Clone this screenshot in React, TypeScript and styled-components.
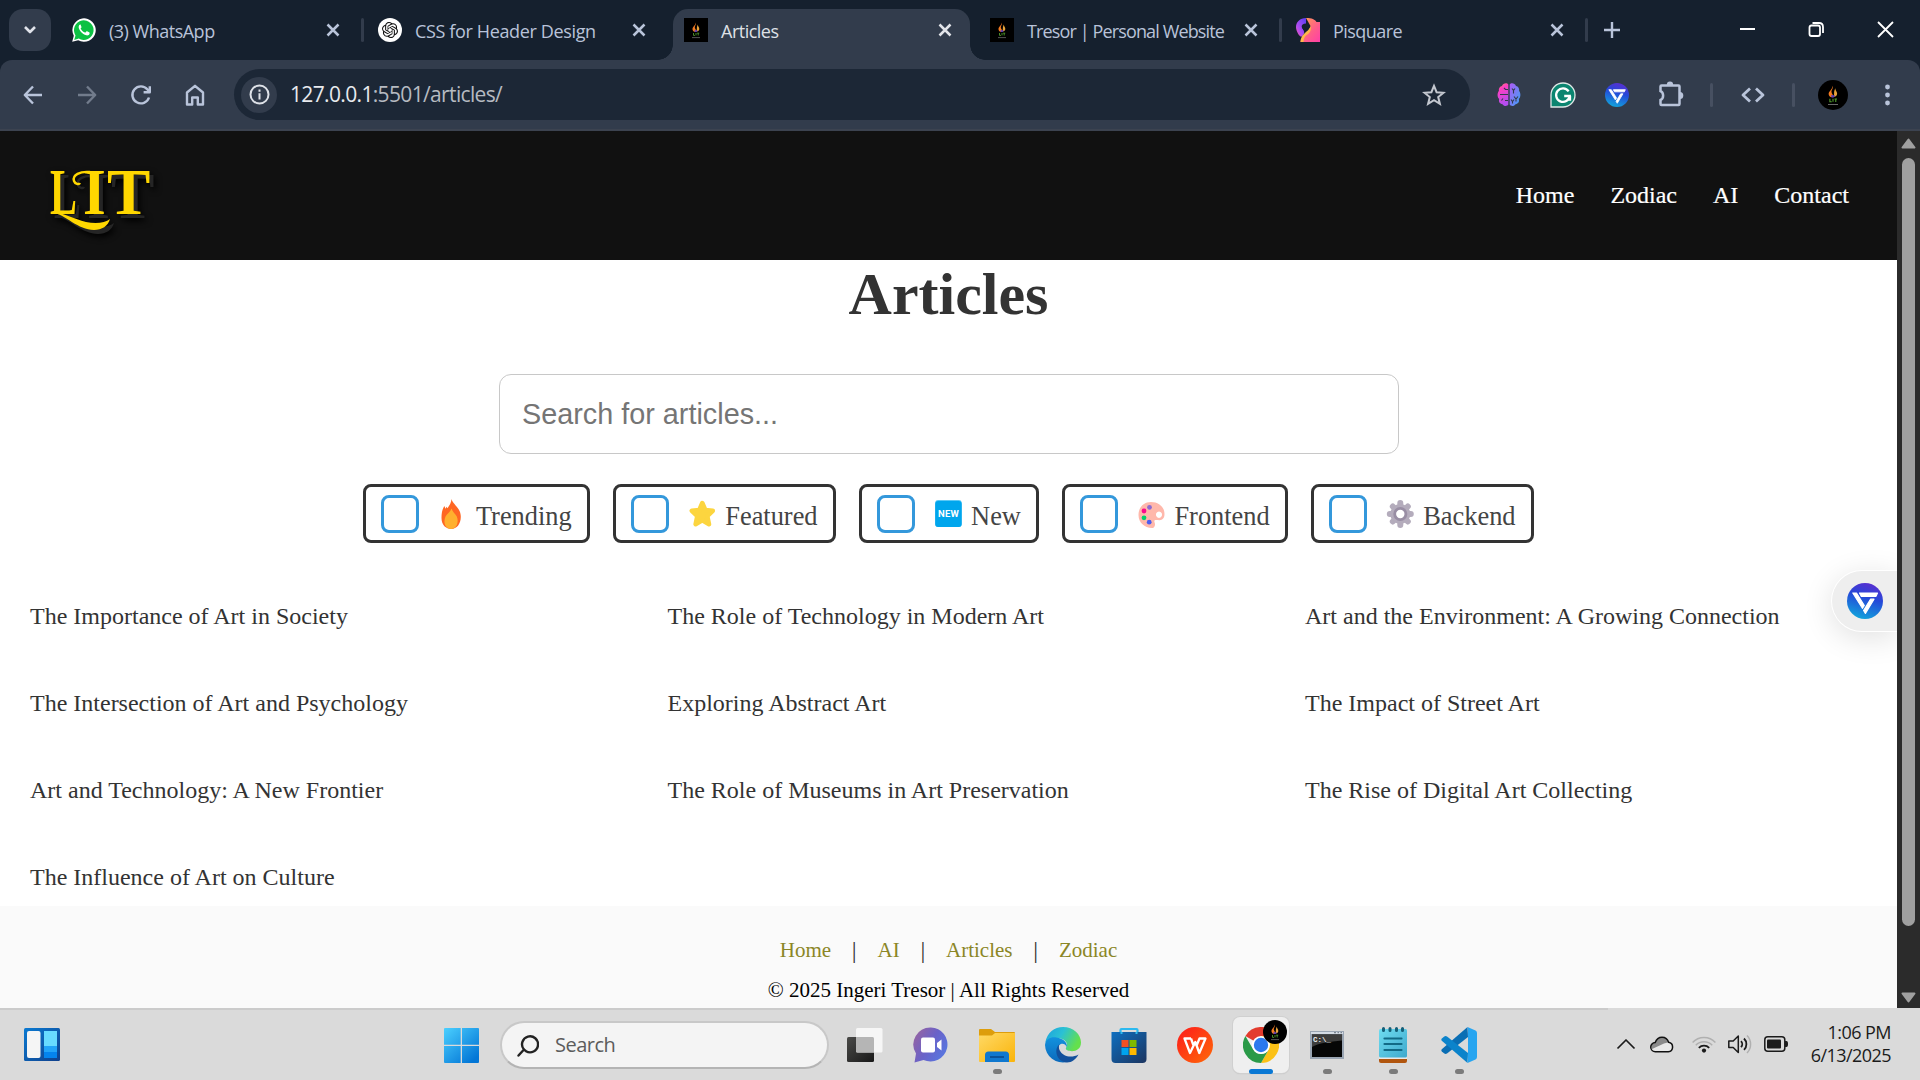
import React from 'react';
import styled, { createGlobalStyle, css } from 'styled-components';
import { SiOpenai } from 'react-icons/si';

const ui = `"Open Sans", "Noto Sans", sans-serif`;
const serif = `"Liberation Serif", "Times New Roman", serif`;

const Global = createGlobalStyle`
  * { box-sizing: border-box; }
  body { margin: 0; overflow: hidden; }
  svg { display: block; flex: none; }
`;

const Screen = styled.div`
  width: 1920px;
  height: 1080px;
  display: flex;
  flex-direction: column;
  overflow: hidden;
  background: #fff;
`;

/* ---------- browser chrome ---------- */

const TabStrip = styled.div`
  height: 60px;
  flex: none;
  display: flex;
  background: #15202e;
`;

const TabSearch = styled.div`
  width: 42px;
  height: 42px;
  margin: 9px 10px 0 9px;
  border-radius: 14px;
  background: #323c4c;
  display: grid;
  place-items: center;
`;

const Tab = styled.div`
  width: 306px;
  height: 60px;
  padding-top: 9px;
  padding-right: 9px;
  display: flex;
`;

const TabBody = styled.div<{ $active?: boolean }>`
  position: relative;
  flex: 1;
  display: flex;
  align-items: center;
  height: 51px;
  padding: 0 18px 9px 11px;
  border-radius: 15px 15px 0 0;
  ${p => p.$active && css`
    background: #323c4c;
    &::before, &::after {
      content: '';
      position: absolute;
      bottom: 0;
      width: 15px;
      height: 15px;
    }
    &::before { left: -15px; background: radial-gradient(circle at 0 0, transparent 14.5px, #323c4c 15px); }
    &::after { right: -15px; background: radial-gradient(circle at 100% 0, transparent 14.5px, #323c4c 15px); }
  `}
`;

const TabLabel = styled.span<{ $active?: boolean; $track: number }>`
  flex: 1;
  margin-left: 13px;
  padding-top: 1px;
  font: 18px/24px ${ui};
  letter-spacing: ${p => p.$track}px;
  white-space: nowrap;
  color: ${p => (p.$active ? '#dfe1e6' : '#b9c3d9')};
`;

const TabDivider = styled.i<{ $hidden?: boolean }>`
  width: 3px;
  height: 24px;
  margin: 9px -6px 0 3px;
  border-radius: 2px;
  background: #323c4c;
  visibility: ${p => (p.$hidden ? 'hidden' : 'visible')};
`;

const NewTab = styled.div`
  margin: 22px 0 0 13px;
`;

const WindowControls = styled.div`
  margin: 21px 26px 0 auto;
  display: flex;
  gap: 52px;
`;

const ToolbarBack = styled.div`
  height: 71px;
  flex: none;
  background: #15202e;
`;

const Toolbar = styled.div`
  height: 71px;
  padding: 9px 0 0 21px;
  border-radius: 12px 12px 0 0;
  background: #323c4c;
  box-shadow: inset 0 -2px #3c4350;
  display: flex;
`;

const NavButtons = styled.div`
  width: 213px;
  height: 51px;
  display: flex;
  align-items: center;
  gap: 30px;
`;

const Omnibox = styled.div`
  width: 1236px;
  height: 51px;
  padding: 0 24px 0 7px;
  border-radius: 26px;
  background: #1c2736;
  display: flex;
  align-items: center;
`;

const SiteInfo = styled.div`
  width: 36px;
  height: 36px;
  border-radius: 50%;
  background: #323c4c;
  display: grid;
  place-items: center;
`;

const Url = styled.div`
  flex: 1;
  margin-left: 13px;
  padding-bottom: 1px;
  font: 21px/30px ${ui};
  letter-spacing: -0.65px;
  color: #b6bac1;
  b { font-weight: 400; color: #e8eaee; }
`;

const Extensions = styled.div`
  height: 51px;
  padding-left: 27px;
  display: flex;
  align-items: center;
  gap: 29px;
`;

const BarDivider = styled.i<{ $before: number; $after: number }>`
  width: 3px;
  height: 24px;
  margin: 0 ${p => p.$after}px 0 ${p => p.$before}px;
  border-radius: 2px;
  background: #475061;
`;

/* ---------- page ---------- */

const Viewport = styled.div`
  height: 877px;
  flex: none;
  display: flex;
  position: relative;
`;

const Page = styled.main`
  width: 1897px;
  display: flex;
  flex-direction: column;
  font-family: ${serif};
`;

const Scrollbar = styled.div`
  width: 23px;
  padding: 7px 0 4px;
  background: #2b2b2b;
  display: flex;
  flex-direction: column;
  align-items: center;
`;

const Thumb = styled.div`
  width: 13px;
  height: 768px;
  margin: 9px 0 auto;
  border-radius: 7px;
  background: #a0a0a0;
`;

const SiteHeader = styled.header`
  height: 129px;
  padding: 0 48px 2px 50px;
  background: #111;
  display: flex;
  justify-content: space-between;
  align-items: center;
`;

const Logo = styled.div`
  position: relative;
  display: flex;
  height: 72px;
  margin-bottom: 5px;
  font: bold 65px/72px ${serif};
  color: #ffd700;
  filter: drop-shadow(4px 4px 0 #252525) drop-shadow(2px 3px 3px #000);
`;

const LogoLetter = styled.span<{ $width: number; $scale: number }>`
  width: ${p => p.$width}px;
  transform: scaleX(${p => p.$scale});
  transform-origin: 0 0;
`;

const Flourish = styled.svg`
  position: absolute;
  left: 0;
  top: 0;
`;

const SiteNav = styled.nav`
  display: flex;
  gap: 36px;
  font-size: 24px;
  line-height: 28px;
  color: #fff;
  -webkit-text-stroke: 0.2px #fff;
`;

const Title = styled.h1`
  margin: -1px 0 0;
  font-size: 60px;
  line-height: 70px;
  text-align: center;
  color: #333;
`;

const SearchInput = styled.input`
  width: 900px;
  height: 80px;
  margin: 45px auto 0;
  padding: 0 22.5px;
  border: 1px solid #c8c8c8;
  border-radius: 12px;
  outline: none;
  background: #fff;
  font: 28.8px "Liberation Sans", Arial, sans-serif;
  &::placeholder { color: #757575; opacity: 1; }
`;

const Filters = styled.div`
  margin-top: 30px;
  display: flex;
  justify-content: center;
  gap: 23px;
`;

const Chip = styled.label`
  height: 59px;
  padding: 0 15px;
  border: 3px solid #333;
  border-radius: 8px;
  display: flex;
  align-items: center;
  font-size: 26.4px;
  line-height: 30px;
  color: #444;
`;

const Box = styled.i`
  width: 38px;
  height: 38px;
  margin-right: 16px;
  border: 3px solid #3498db;
  border-radius: 8px;
`;

const Emoji = styled.span`
  width: 34.5px;
  height: 32px;
  margin: 2px 6px 0 0;
`;

const ChipText = styled.span`
  padding-top: 4px;
`;

const ArticleGrid = styled.section`
  margin: 59px 30px 15px;
  display: grid;
  grid-template-columns: repeat(3, 637.5px);
  row-gap: 59px;
  font-size: 24px;
  line-height: 28px;
  color: #333;
`;

const SiteFooter = styled.footer`
  flex: 1;
  padding-top: 30px;
  background: #fafafa;
  text-align: center;
`;

const FooterLinks = styled.div`
  display: flex;
  justify-content: center;
  gap: 20.8px;
  margin-bottom: 14px;
  font-size: 21px;
  line-height: 28px;
  color: #8b8626;
`;

const Pipe = styled.span`
  font-size: 24px;
  color: #333;
`;

const Copyright = styled.div`
  font-size: 21px;
  line-height: 24px;
  color: #000;
`;

const SideHandle = styled.div`
  position: absolute;
  right: 23px;
  top: 439px;
  width: 66px;
  height: 62px;
  padding: 12px 0 0 15px;
  border: 1.5px solid #fff;
  border-right: 0;
  border-radius: 31px 0 0 31px;
  background: #eee;
  box-shadow: 0 6px 30px rgba(0, 0, 0, 0.12);
  clip-path: inset(-40px 0 -50px -50px);
`;

/* ---------- taskbar ---------- */

const Taskbar = styled.div`
  height: 72px;
  flex: none;
  background: linear-gradient(#cbcbcb, #cbcbcb) 0 0 / 1608px 2px no-repeat #dadada;
  display: flex;
  align-items: center;
`;

const Start = styled.div`
  width: 479px;
  padding-left: 24px;
  margin-top: 2px;
  display: flex;
  justify-content: space-between;
`;

const SearchPill = styled.div`
  width: 329px;
  height: 48px;
  margin: 2px 0 0 21px;
  padding-left: 15px;
  border: 2px solid #c8c8c8;
  border-bottom-color: #b4b4b4;
  border-radius: 24px;
  background: #f4f4f4;
  display: flex;
  align-items: center;
  gap: 16px;
  font: 20px/28px ${ui};
  letter-spacing: -0.5px;
  color: #5c5c5c;
`;

const Apps = styled.div`
  display: flex;
  margin: 2px 0 0 3px;
`;

const AppTile = styled.div<{ $current?: boolean }>`
  position: relative;
  width: 56px;
  height: 56px;
  margin: 0 5px;
  border-radius: 7px;
  display: grid;
  place-items: center;
  ${p => p.$current && css`
    background: #efefef;
    box-shadow: 0 0 0 1px #d0d0d0, 0 1px 1px #bbb;
  `}
`;

const Indicator = styled.i<{ $current?: boolean }>`
  position: absolute;
  bottom: -1px;
  left: ${p => (p.$current ? 16 : 23.5)}px;
  width: ${p => (p.$current ? 24 : 9)}px;
  height: 5px;
  border-radius: 3px;
  background: ${p => (p.$current ? '#0a78d4' : '#7b7b7b')};
`;

const Badge = styled.span`
  position: absolute;
  left: 30px;
  top: 3px;
`;

const Tray = styled.div`
  margin-left: auto;
  margin-right: 29px;
  display: flex;
  align-items: center;
`;

const TrayIcon = styled.span<{ $gap: number }>`
  margin-right: ${p => p.$gap}px;
`;

const Clock = styled.div`
  width: 82px;
  text-align: right;
  white-space: nowrap;
  font: 18px/23px ${ui};
  letter-spacing: -0.55px;
  color: #1b1b1b;
`;

/* ---------- icons ---------- */

type StrokeProps = { w: number; h: number; d: string; color?: string; sw?: number; cap?: 'round' | 'butt' };
const Stroke = ({ w, h, d, color = '#b9c4da', sw = 2.4, cap = 'butt' }: StrokeProps) => (
  <svg width={w} height={h} viewBox={`0 0 ${w} ${h}`} fill="none" stroke={color} strokeWidth={sw} strokeLinecap={cap} strokeLinejoin="round">
    <path d={d} />
  </svg>
);

const Close = ({ color }: { color: string }) => <Stroke w={14} h={14} d="M1.5 1.5 12.5 12.5M12.5 1.5 1.5 12.5" color={color} sw={2.5} />;

const WhatsApp = () => (
  <svg width="24" height="24" viewBox="0 0 24 24">
    <path d="M.2 23.8 1.8 17.7A11.7 11.7 0 1 1 6.2 22.2z" fill="#fff" />
    <path d="M2.2 21.9 3.5 17.4A9.8 9.8 0 1 1 6.8 20.6z" fill="#0cc143" />
    <path d="M8.4 6.6c-.9 0-1.9 1.1-1.7 2.8.3 2.3 3.4 6.8 7.6 7.9 1.7.4 3.2-.7 3.3-1.9.1-.8 0-.9-.5-1.2l-2-.9c-.5-.2-.7 0-1.7 1.3-.4.2-3-.7-4.8-4 0-.5 1-1 .9-1.7l-.8-1.9c-.1-.4-.1-.4-.3-.4z" fill="#fff" />
  </svg>
);

const ChatIcon = () => (
  <svg width="24" height="24" viewBox="0 0 24 24">
    <circle cx="12" cy="12" r="12" fill="#fff" />
    <g transform="translate(4 4)"><SiOpenai size={16} color="#111" /></g>
  </svg>
);

const Flame = ({ size, round }: { size: number; round?: boolean }) => (
  <svg width={size} height={size} viewBox="0 0 24 24">
    {round ? <circle cx="12" cy="12" r="12" fill="#000" /> : <path d="M0 0h24v24H0z" fill="#000" />}
    <path d="M11.6 4.5c1 2-1 3.3-.8 5 .1 1.5 1.6 2 1.2 4-1.600.8-3.400-.3-3.500-2.300C8.400 8.800 11.700 7.500 11.600 4.500z" fill="#f47a20" />
    <path d="M14 6.500c-.4 1.900 1.400 2.600 1.300 4.500-.1 1.600-1.600 2.700-2.900 2.300 1.100-2.600-.3-3.700 1.600-6.800z" fill="#e8a33a" />
    <path d="M10.300 12.200h3.300l-1 1.800h-1.500z" fill="#5a3fc0" />
    <path d="M9.500 15v2.400h1.500M12 15v2.400M13.200 15.200h2M14.200 15.200v2.300" stroke="#4f9a2c" strokeWidth=".9" fill="none" />
    <path d="M8 19.600h8" stroke="#777" strokeWidth=".7" />
  </svg>
);

const Pisquare = () => (
  <svg width="24" height="24" viewBox="0 0 24 24">
    <defs>
      <linearGradient id="piA" x1="0" y1="0" x2="1" y2="1"><stop offset="0" stopColor="#ffa64d" /><stop offset=".6" stopColor="#ff5c8a" /><stop offset="1" stopColor="#ff3fa8" /></linearGradient>
      <linearGradient id="piB" x1="0" y1="1" x2="1" y2="0"><stop offset="0" stopColor="#ff55a8" /><stop offset=".35" stopColor="#b04df0" /><stop offset="1" stopColor="#5a3df5" /></linearGradient>
    </defs>
    <path d="M10 0C16 0 19 1.500 20.500 4H24V24H4.500C5 18 14 14 14.500 8z" fill="url(#piA)" />
    <path d="M10 0V5.500C7 5.500 5.500 7 5.700 9c.3 2 2.500 3 2.500 5.500-.3 2-1.500 4-3.200 4.300C2 17 0 12 0 9 0 4 4 0 10 0z" fill="url(#piB)" />
    <path d="M9.500 6C12 6 13 7.500 12.600 9.500c-.5 2-2.600 2.800-3.800 4.500C8.500 12 6.500 11.500 6.300 9.300 6.200 7.300 7.500 6 9.500 6z" fill="#15202e" />
    <path d="M14.500 8c1 3 0 7-4 9-2 1.500-3 4-3 7H4.500c0-3 1-5.500 3-7.500 2.500-3 6-4.500 7-8.500z" fill="#ffb84a" />
  </svg>
);

const Brain = () => (
  <svg width="24" height="28" viewBox="0 0 24 28">
    <defs>
      <linearGradient id="brL" x1="0" y1="0" x2=".3" y2="1"><stop offset="0" stopColor="#ff9a5a" /><stop offset=".3" stopColor="#ff3fc0" /><stop offset="1" stopColor="#b44df0" /></linearGradient>
      <linearGradient id="brR" x1="0" y1="0" x2="1" y2="1"><stop offset="0" stopColor="#b05af5" /><stop offset="1" stopColor="#3aa4f5" /></linearGradient>
    </defs>
    <path d="M11.300 3.500v20c-1 2-4.600 2-5.800-.3C2.600 23.100 1.400 20.500 2.200 18.100.2 16.500 0 12 1.900 10 1.400 7.500 2.800 5.500 5 5.100 6 2.100 10 1.500 11.300 3.500z" fill="url(#brL)" />
    <path d="M12.700 3.500v20c1 2 4.600 2 5.800-.3 2.900-.1 4.100-2.700 3.300-5.100 2-1.600 2.200-6.100.3-8.100.5-2.500-.9-4.500-3.100-4.900C18 2.100 14 1.500 12.700 3.500z" fill="url(#brR)" />
    <path d="M11 8.500H8.500L7 7M3 13.500h8M6 17.500l-1.500 2M11 19.500H8M15 7.500l1.500 2M18 7.500l-1.500 2v3M17 15.500l2 2.500 2-2.500M19 18v2.500M14 18.500l1.500 2 1.500-2M15.500 20.500v2" stroke="#323c4c" strokeWidth="1.100" fill="none" />
  </svg>
);

const Grammarly = () => (
  <svg width="26" height="26" viewBox="0 0 26 26">
    <path d="M1 25V13A12 12 0 1 1 13 25z" fill="#0b8570" stroke="#dfe7e6" strokeWidth="1.300" />
    <path d="M18.600 9.300A6.800 6.800 0 1 0 19.700 14H14.200M20 14v4.800" fill="none" stroke="#fff" strokeWidth="2.300" />
  </svg>
);

const VMark = ({ size }: { size: number }) => (
  <svg width={size} height={size} viewBox="0 0 36 36">
    <defs>
      <linearGradient id="vm" x1=".65" y1="0" x2=".35" y2="1"><stop offset="0" stopColor="#5a2fd0" /><stop offset=".4" stopColor="#2448d8" /><stop offset="1" stopColor="#12a5dc" /></linearGradient>
    </defs>
    <circle cx="18" cy="18" r="18" fill="url(#vm)" />
    <g fill="#fff" stroke="#fff" strokeWidth="1.200" strokeLinejoin="round">
      <path d="M12.500 10H30.500L29 13.300H14.200z" />
      <path d="M5.800 10H9.500L17.300 22.500 15.400 25.300z" />
      <path d="M23.500 16.200H27L18.400 30.400 16.600 27.500z" />
    </g>
  </svg>
);

const Puzzle = () => (
  <svg width="26" height="27" viewBox="0 0 26 27">
    <path d="M2.500 5.500Q2.500 4.500 3.500 4.500H20.500Q21.500 4.500 21.500 5.500V23Q21.500 24 20.500 24H3.500Q2.500 24 2.500 23V19C6 17.600 6 11.600 2.500 10.200z" fill="none" stroke="#b9c4da" strokeWidth="2.500" />
    <path d="M8.800 4a3.200 3.400 0 0 1 6.400 0zM22 11a3.300 3.500 0 0 1 0 7z" fill="#b9c4da" />
  </svg>
);

const FireEmoji = () => (
  <svg width="34" height="32" viewBox="0 0 34 32">
    <path d="M16.500 0c1 4.500 6.500 7.500 8.500 13 .6 2 .8 3.500.8 5 0 7-4.200 12-9.500 12S6.500 26 6.500 19C6.500 13.500 7.500 10 9.300 7l1.300 2.700 1-2 .9 1.500C14.500 6.500 16.300 3.500 16.500 0z" fill="#ff6723" />
    <path d="M16.500 9.500c1 3.500 3.700 5 5.300 8C24 22.500 22 29.500 16.400 30 10 29.800 8 23.500 10.500 17.500c1.600-3 5-4.500 6-8z" fill="#ffb02e" />
  </svg>
);
const StarEmoji = () => (
  <svg width="34" height="32" viewBox="0 0 34 32">
    <path d="M17.300 4l3 7 7.500.8-5.500 5.200 1.700 8.200-6.700-3.800-6.700 3.800 1.700-8.200-5.500-5.200 7.500-.8z" fill="#fcd53f" stroke="#fcd53f" strokeWidth="4.500" strokeLinejoin="round" />
  </svg>
);
const NewEmoji = () => (
  <svg width="34" height="32" viewBox="0 0 34 32">
    <rect x="4.200" y="1" width="26.500" height="27" rx="3" fill="#5cc8f5" />
    <rect x="4.200" y="2" width="26.500" height="26" rx="3" fill="#00a6ed" />
    <text x="17.400" y="18" textAnchor="middle" fontFamily="Roboto, sans-serif" fontWeight="700" fontSize="9.500" textLength="21" fill="#fff">NEW</text>
  </svg>
);
const PaletteEmoji = () => (
  <svg width="34" height="32" viewBox="0 0 34 32">
    <path fillRule="evenodd" d="M17 3c8 0 13.500 5.300 13.500 12 0 4-2 6.200-5 6.200-2.600 0-4.300-.6-5 .4-.6 1 .8 2.300.5 4.300C20.700 28 19.500 29 18 29 10.500 29 4.500 23.500 4.500 16S9.500 3 17 3zm8 9.500a3 3.200 0 1 0 .01 0z" fill="#ffb8ab" />
    <circle cx="15.500" cy="8.300" r="2.400" fill="#8c6bd0" /><circle cx="10" cy="12" r="2.400" fill="#fc0a8c" /><circle cx="10" cy="18.800" r="2.400" fill="#00d26a" /><circle cx="15.200" cy="23.200" r="2.400" fill="#4b5cf0" />
  </svg>
);
const GearEmoji = () => (
  <svg width="34" height="32" viewBox="0 0 34 32">
    <g stroke="#b4acbc" strokeWidth="6" strokeLinecap="round">
      <path d="M17.300 4v22M6.800 15h21M9.800 7.500l15 15M24.800 7.500l-15 15" />
    </g>
    <circle cx="17.300" cy="15" r="8.500" fill="none" stroke="#b4acbc" strokeWidth="3" />
    <circle cx="17.300" cy="15" r="5.600" fill="#fff" stroke="#998ea4" strokeWidth="2.800" />
  </svg>
);

const Widgets = () => (
  <svg width="36" height="33" viewBox="0 0 36 33">
    <defs><linearGradient id="wg" x1="0" y1="0" x2="1" y2="1"><stop offset="0" stopColor="#0a7ad2" /><stop offset="1" stopColor="#10408c" /></linearGradient></defs>
    <rect width="36" height="33" rx="1.500" fill="url(#wg)" />
    <rect x="3" y="3" width="13.500" height="27" rx="2" fill="#f5f5f5" />
    <path d="M20 3h13v15H20z" fill="#68dbff" /><path d="M20 18h13v6H20z" fill="#22a4f8" /><path d="M20 24h13v6H20z" fill="#0484ee" />
  </svg>
);
const Windows = () => (
  <svg width="35" height="35" viewBox="0 0 35 35">
    <defs><linearGradient id="wn" gradientUnits="userSpaceOnUse" x1="0" y1="0" x2="30" y2="32"><stop offset="0" stopColor="#4bd0ff" /><stop offset="1" stopColor="#0376d6" /></linearGradient></defs>
    <path d="M0 1q0-1 1-1h15.700v16.800H0zM18 0h16q1 0 1 1v15.800H18zM0 18.100h16.700V35H1q-1 0-1-1zM18 18.100h17V34q0 1-1 1H18z" fill="url(#wn)" />
  </svg>
);
const TaskView = () => (
  <svg width="36" height="36" viewBox="0 0 36 36">
    <defs><linearGradient id="tv" x1="0" y1="0" x2="1" y2="1"><stop offset="0" stopColor="#4a4a48" /><stop offset="1" stopColor="#181818" /></linearGradient></defs>
    <rect x="0" y="10" width="27" height="25" rx="1.500" fill="url(#tv)" />
    <rect x="9" y="1" width="26.500" height="24.500" rx="1.500" fill="#f8f8f8" opacity=".92" />
    <path d="M9 10h16.500q1.500 0 1.500 1.500V25.500H10.500Q9 25.500 9 24z" fill="#b5b5b5" />
  </svg>
);
const Chat = () => (
  <svg width="36" height="36" viewBox="0 0 36 36">
    <defs><linearGradient id="ch" x1=".1" y1=".2" x2=".9" y2=".7"><stop offset="0" stopColor="#8f63a8" /><stop offset=".5" stopColor="#6a62c8" /><stop offset="1" stopColor="#5a74dd" /></linearGradient></defs>
    <path d="M18 .5a17 17 0 1 1-7.500 32.500L1.500 35.500 3 26.500A17 17 0 0 1 18 .5z" fill="url(#ch)" />
    <rect x="8" y="10.500" width="14" height="15" rx="2" fill="#fff" /><path d="M24 16 28.500 12.500v11L24 20z" fill="#fff" />
  </svg>
);
const Folder = () => (
  <svg width="36" height="33" viewBox="0 0 36 33">
    <defs><linearGradient id="fo" x1="0" y1="0" x2="1" y2="1"><stop offset="0" stopColor="#ffd966" /><stop offset="1" stopColor="#fab40a" /></linearGradient></defs>
    <path d="M0 1q0-1 1-1h11l4 3h19q1 0 1 1v8H0z" fill="#dd9d0c" />
    <path d="M0 6.500h13l3-2.500h20v28q0 1-1 1H1q-1 0-1-1z" fill="url(#fo)" />
    <path d="M6 33v-7q0-3.500 3.500-3.500h17q3.500 0 3.500 3.500v7z" fill="#0f78cf" /><path d="M11 28h14" stroke="#0a4f94" strokeWidth="1.800" />
  </svg>
);
const Edge = () => (
  <svg width="36" height="36" viewBox="0 0 36 36">
    <defs>
      <linearGradient id="e1" x1="0" y1="0" x2="1" y2=".4"><stop offset="0" stopColor="#1ba0df" /><stop offset=".5" stopColor="#2bc1d4" /><stop offset="1" stopColor="#64e04c" /></linearGradient>
      <linearGradient id="e2" x1="0" y1="0" x2="0" y2="1"><stop offset="0" stopColor="#1392de" /><stop offset="1" stopColor="#0b69bb" /></linearGradient>
    </defs>
    <path d="M.2 16C2 5.500 9.500 0 18 0c10.500 0 18 7.500 18 15.500 0 6-4.500 8.700-9 8.700-4 0-7-1.500-6-3.400 3-3.500-.5-9-7-9.500C7 10.800 2 12.500.2 16z" fill="url(#e1)" />
    <path d="M0 18C.5 12 6 9.500 11.500 10.500 19 11.500 23 16.500 21.500 20 20 15 13 16 13 22c0 5.500 5 10 9 13A18 18 0 0 1 0 18z" fill="url(#e2)" />
    <path d="M14.500 17C8 23 12 35 22 35.500c5 0 9-3.500 11.500-8-6 3.500-15.500 3-19-4.500-.8-2-.8-4 0-6z" fill="#12509c" />
  </svg>
);
const Store = () => (
  <svg width="36" height="36" viewBox="0 0 36 36">
    <defs><linearGradient id="st" x1="0" y1="0" x2="1" y2="1"><stop offset="0" stopColor="#0d6fc0" /><stop offset="1" stopColor="#1d3560" /></linearGradient></defs>
    <path d="M9.500 8V3q0-1 1-1h15q1 0 1 1v5" fill="none" stroke="#2cb9ef" strokeWidth="2.200" />
    <path d="M.5 5h35v27q0 4-4 4h-27q-4 0-4-4z" fill="url(#st)" />
    <path d="M9.500 7V5h2v2M24.500 7V5h2v2" fill="#2cb9ef" />
    <path d="M10.500 13h7v7h-7z" fill="#f25022" /><path d="M18.500 13h7v7h-7z" fill="#7fba00" /><path d="M10.500 21h7v7h-7z" fill="#00a4ef" /><path d="M18.500 21h7v7h-7z" fill="#ffb900" />
  </svg>
);
const Wps = () => (
  <svg width="36" height="36" viewBox="0 0 36 36">
    <defs><linearGradient id="wp" x1="0" y1="0" x2="1" y2="1"><stop offset="0" stopColor="#fd1a1c" /><stop offset="1" stopColor="#ff6a08" /></linearGradient></defs>
    <circle cx="18" cy="18" r="18" fill="url(#wp)" />
    <path d="M14 11.500H7.500L13 26 18.300 15 22.300 26 28.500 11.500H22.500L19.800 18M14 11.500 16.500 18.500" fill="none" stroke="#fff" strokeWidth="2.300" strokeLinejoin="round" />
  </svg>
);
const Chrome = () => (
  <svg width="36" height="36" viewBox="0 0 36 36">
    <path d="M18 18 2.400 9A18 18 0 0 1 33.600 9z" fill="#e33b2e" />
    <path d="M18 9H33.600A18 18 0 0 1 18 36L25.800 22.500z" fill="#fbc116" />
    <path d="M2.400 9 10.200 22.500A9 9 0 0 0 25.800 22.500L18 36A18 18 0 0 1 2.400 9z" fill="#2a9a48" />
    <circle cx="18" cy="18" r="9" fill="#fff" /><circle cx="18" cy="18" r="7.200" fill="#2b78ee" />
  </svg>
);
const Cmd = () => (
  <svg width="34" height="28" viewBox="0 0 34 28">
    <path d="M0 0h34v28H0z" fill="#9aa5b3" /><path d="M1 1h32v2H1z" fill="#d5dce5" /><path d="M2 3.500h30V26H2z" fill="#060606" />
    <path d="M2 3.500h30v6C20 11 8 12 2 16z" fill="#3d3d3d" />
    <text x="3" y="11" fontFamily="Liberation Mono, monospace" fontWeight="700" fontSize="7.500" textLength="18" fill="#f0f0f0">C:\_</text>
    <path d="M24 1.700h2M27.500 1.700h1.500M30.500 1.700h1.500" stroke="#66707c" />
  </svg>
);
const Notepad = () => (
  <svg width="28" height="36" viewBox="0 0 28 36">
    <defs><linearGradient id="np" x1="0" y1="0" x2="1" y2="1"><stop offset="0" stopColor="#6edcf0" /><stop offset="1" stopColor="#3fa9cd" /></linearGradient></defs>
    <path d="M0 31.500h28V34q0 2-2 2H2q-2 0-2-2z" fill="#b1560f" /><path d="M0 29h28v3H0z" fill="#e9e9e9" />
    <rect y="2" width="28" height="28.500" rx="1.500" fill="url(#np)" />
    <path d="M5.500 11.500h17M5.500 17h17M5.500 23h17" stroke="#126a86" strokeWidth="2.200" strokeLinecap="round" />
    <path d="M4.500 1.500v2M11 1.500v2M17.500 1.500v2M23.500 1.500v2" stroke="#155f78" strokeWidth="3" strokeLinecap="round" />
  </svg>
);
const Code = () => (
  <svg width="36" height="36" viewBox="0 0 36 36">
    <path d="M26.500 0 27 10 6 26.500Q4.500 27.500 3 26.300L.8 24.400Q-.2 23.300.8 22.200z" fill="#0a6eb4" />
    <path d="M.8 13.800Q-.2 12.700.8 11.600L3 9.700Q4.500 8.500 6 9.500L27 26 26.500 36z" fill="#0b83cb" />
    <path d="M26.500 0 34.500 3.500Q36 4.300 36 6V30Q36 31.700 34.500 32.500L26.500 36Q27 35 27 33V3Q27 1 26.500 0z" fill="#27a5f0" />
  </svg>
);

const Cloud = () => (
  <svg width="24" height="17" viewBox="0 0 24 17">
    <path d="M5.500 15.800a4.600 4.600 0 0 1-.3-9.200C6.500 3 9 1.200 12 1.200c3.200 0 5.700 2 6.600 5.100a4.800 4.800 0 0 1-.3 9.500z" fill="#e9e9e9" />
    <path d="M2 13 14 7.500 18.600 6.300C17.700 3.200 15.200 1.200 12 1.200 9 1.200 6.500 3 5.200 6.600 2 7 .5 10 2 13z" fill="#8b8b8b" />
    <path d="M5.500 15.800a4.600 4.600 0 0 1-.3-9.200C6.500 3 9 1.200 12 1.200c3.200 0 5.700 2 6.600 5.100a4.800 4.800 0 0 1-.3 9.500z" fill="none" stroke="#111" strokeWidth="1.500" />
  </svg>
);
const Wifi = () => (
  <svg width="24" height="18" viewBox="0 0 24 18" fill="none" strokeWidth="1.500">
    <path d="M.6 7.500a15.500 15.500 0 0 1 22.800 0M3.800 10.200a11.500 11.500 0 0 1 16.400 0" stroke="#b0b0b0" />
    <path d="M6.800 12.800a7.500 7.500 0 0 1 10.400 0" stroke="#1b1b1b" strokeWidth="1.800" />
    <circle cx="12" cy="15.600" r="2.100" fill="#1b1b1b" />
  </svg>
);
const Volume = () => (
  <svg width="24" height="20" viewBox="0 0 24 20" fill="none" stroke="#1b1b1b" strokeWidth="1.500" strokeLinejoin="round">
    <path d="M.8 7h4.400L10.300 2v16.500L5.200 13.500H.8z" />
    <path d="M13 7.200a4.300 4.300 0 0 1 0 6M16 4.500a8 8 0 0 1 0 11.400" strokeWidth="1.800" />
    <path d="M19 1.500a12.500 12.500 0 0 1 0 17.500" stroke="#b0b0b0" />
  </svg>
);
const Battery = () => (
  <svg width="24" height="16" viewBox="0 0 24 16">
    <rect x=".8" y=".8" width="20" height="14.400" rx="3" fill="none" stroke="#1b1b1b" strokeWidth="1.500" />
    <rect x="3" y="3.500" width="14" height="9" rx="1" fill="#1b1b1b" /><path d="M21 5h1.500q1.500 0 1.500 3t-1.500 3H21z" fill="#1b1b1b" />
  </svg>
);

/* ---------- data ---------- */

const tabs = [
  { label: '(3) WhatsApp', icon: <WhatsApp />, track: -0.5 },
  { label: 'CSS for Header Design', icon: <ChatIcon />, track: -0.36, noDivider: true },
  { label: 'Articles', icon: <Flame size={24} />, active: true, track: -0.5, noDivider: true },
  { label: 'Tresor | Personal Website', icon: <Flame size={24} />, track: -0.87 },
  { label: 'Pisquare', icon: <Pisquare />, track: -0.55 },
];

const filters = [
  { label: 'Trending', icon: <FireEmoji /> },
  { label: 'Featured', icon: <StarEmoji /> },
  { label: 'New', icon: <NewEmoji /> },
  { label: 'Frontend', icon: <PaletteEmoji /> },
  { label: 'Backend', icon: <GearEmoji /> },
];

const articles = [
  'The Importance of Art in Society', 'The Role of Technology in Modern Art', 'Art and the Environment: A Growing Connection',
  'The Intersection of Art and Psychology', 'Exploring Abstract Art', 'The Impact of Street Art',
  'Art and Technology: A New Frontier', 'The Role of Museums in Art Preservation', 'The Rise of Digital Art Collecting',
  'The Influence of Art on Culture',
];

const apps: { icon: React.ReactNode; open?: boolean; current?: boolean }[] = [
  { icon: <TaskView /> }, { icon: <Chat /> }, { icon: <Folder />, open: true }, { icon: <Edge /> }, { icon: <Store /> }, { icon: <Wps /> },
  { icon: <Chrome />, open: true, current: true }, { icon: <Cmd />, open: true }, { icon: <Notepad />, open: true }, { icon: <Code />, open: true },
];

export default function App() {
  return (
    <Screen>
      <Global />
      <TabStrip>
        <TabSearch><Stroke w={14} h={10} d="M2 2 7 7 12 2" color="#e0e3ea" sw={2.6} /></TabSearch>
        {tabs.map(t => (
          <Tab key={t.label}>
            <TabBody $active={t.active}>
              {t.icon}
              <TabLabel $active={t.active} $track={t.track}>{t.label}</TabLabel>
              <Close color={t.active ? '#e3e5ea' : '#b9c4da'} />
            </TabBody>
            <TabDivider $hidden={t.noDivider} />
          </Tab>
        ))}
        <NewTab><Stroke w={16} h={16} d="M8 0V16M0 8H16" /></NewTab>
        <WindowControls>
          <Stroke w={17} h={16} d="M1 8H16" color="#fff" sw={2} />
          <Stroke w={17} h={17} d="M3.500 4.500H10Q12 4.500 12 6.500V13Q12 15 10 15H3.500Q1.500 15 1.500 13V6.500Q1.500 4.500 3.500 4.500M4.500 2H11Q15 2 15 6V12" color="#fff" sw={1.8} />
          <Stroke w={17} h={17} d="M1 1 16 16M16 1 1 16" color="#fff" sw={1.8} />
        </WindowControls>
      </TabStrip>
      <ToolbarBack>
        <Toolbar>
          <NavButtons>
            <Stroke w={24} h={24} d="M21 12H4.500M12 3.500 3.800 12 12 20.500" />
            <Stroke w={24} h={24} d="M3 12H19.500M12 3.500 20.200 12 12 20.500" color="#727c8c" />
            <Stroke w={24} h={24} d="M20 14.500A8.500 8.500 0 1 1 18.500 6.500L20.500 9M20.800 3.200V9.200H14.600" />
            <Stroke w={24} h={24} d="M4 21.500V9.500L12 2.800 20 9.500V21.500H14.800V14.500H9.200V21.500z" />
          </NavButtons>
          <Omnibox>
            <SiteInfo>
              <svg width="21" height="21" viewBox="0 0 21 21" fill="none" stroke="#dfe2e8" strokeWidth="2">
                <circle cx="10.500" cy="10.500" r="9" /><path d="M10.500 9.300V15.500M10.500 5.500V7.700" />
              </svg>
            </SiteInfo>
            <Url><b>127.0.0.1</b>:5501/articles/</Url>
            <svg width="24" height="24" viewBox="0 0 24 24" fill="none" stroke="#c3c7cf" strokeWidth="2">
              <path d="M12 2.800 14.600 9.200 21.500 9.700 16.200 14.100 17.900 20.900 12 17.200 6.100 20.900 7.800 14.100 2.500 9.700 9.400 9.200z" />
            </svg>
          </Omnibox>
          <Extensions>
            <Brain />
            <Grammarly />
            <VMark size={24} />
            <Puzzle />
            <BarDivider $before={-3} $after={-1} />
            <Stroke w={24} h={16} d="M9 1.500 2 8 9 14.500M15 1.500 22 8 15 14.500" sw={2.8} />
            <BarDivider $before={-2} $after={-6} />
            <Flame size={30} round />
            <svg width="22" height="24" viewBox="0 0 22 24" fill="#b9c4da"><circle cx="10.500" cy="4" r="2.400" /><circle cx="10.500" cy="12" r="2.400" /><circle cx="10.500" cy="20" r="2.400" /></svg>
          </Extensions>
        </Toolbar>
      </ToolbarBack>

      <Viewport>
        <Page>
          <SiteHeader>
            <Logo>
              <LogoLetter $width={33} $scale={0.62}>L</LogoLetter>
              <LogoLetter $width={24} $scale={0.9}>I</LogoLetter>
              <LogoLetter $width={46} $scale={1}>T</LogoLetter>
              <Flourish width="104" height="80" viewBox="0 0 104 80" fill="#ffd700">
                <path d="M2 56C14 57 24 63 36 66 46 68 55 67 60 63 58 70 52 74 44 74 28 74 16 59 2 56z" />
                <path d="M40 16C30 15 22 19 24 25 25 28 29 29 30 27" fill="none" stroke="#ffd700" strokeWidth="2.400" />
              </Flourish>
            </Logo>
            <SiteNav><span>Home</span><span>Zodiac</span><span>AI</span><span>Contact</span></SiteNav>
          </SiteHeader>
          <Title>Articles</Title>
          <SearchInput placeholder="Search for articles..." />
          <Filters>
            {filters.map(f => (
              <Chip key={f.label}><Box /><Emoji>{f.icon}</Emoji><ChipText>{f.label}</ChipText></Chip>
            ))}
          </Filters>
          <ArticleGrid>{articles.map(a => <span key={a}>{a}</span>)}</ArticleGrid>
          <SiteFooter>
            <FooterLinks>
              <span>Home</span><Pipe>|</Pipe><span>AI</span><Pipe>|</Pipe><span>Articles</span><Pipe>|</Pipe><span>Zodiac</span>
            </FooterLinks>
            <Copyright>© 2025 Ingeri Tresor | All Rights Reserved</Copyright>
          </SiteFooter>
        </Page>
        <Scrollbar>
          <svg width="15" height="11" viewBox="0 0 15 11"><path d="M7.500 1.500 13.500 9.500H1.500z" fill="#a0a0a0" stroke="#a0a0a0" strokeWidth="2" strokeLinejoin="round" /></svg>
          <Thumb />
          <svg width="15" height="12" viewBox="0 0 15 12"><path d="M7.500 9.500 13.500 1.500H1.500z" fill="#a0a0a0" stroke="#a0a0a0" strokeWidth="2" strokeLinejoin="round" /></svg>
        </Scrollbar>
        <SideHandle><VMark size={36} /></SideHandle>
      </Viewport>

      <Taskbar>
        <Start><Widgets /><Windows /></Start>
        <SearchPill>
          <Stroke w={22} h={23} d="M6.800 15.300A8 8 0 1 1 9 17.200M7 15.500 1.500 21.500M6.800 15.300 9 17.200" color="#222" sw={2.4} cap="round" />
          Search
        </SearchPill>
        <Apps>
          {apps.map((a, i) => (
            <AppTile key={i} $current={a.current}>
              {a.icon}
              {a.current && <Badge><Flame size={24} round /></Badge>}
              {a.open && <Indicator $current={a.current} />}
            </AppTile>
          ))}
        </Apps>
        <Tray>
          <TrayIcon $gap={14}><Stroke w={20} h={12} d="M1.500 10.500 10 2 18.500 10.500" color="#1b1b1b" sw={1.7} /></TrayIcon>
          <TrayIcon $gap={18}><Cloud /></TrayIcon>
          <TrayIcon $gap={12}><Wifi /></TrayIcon>
          <TrayIcon $gap={12}><Volume /></TrayIcon>
          <TrayIcon $gap={21}><Battery /></TrayIcon>
          <Clock>1:06 PM<br />6/13/2025</Clock>
        </Tray>
      </Taskbar>
    </Screen>
  );
}
